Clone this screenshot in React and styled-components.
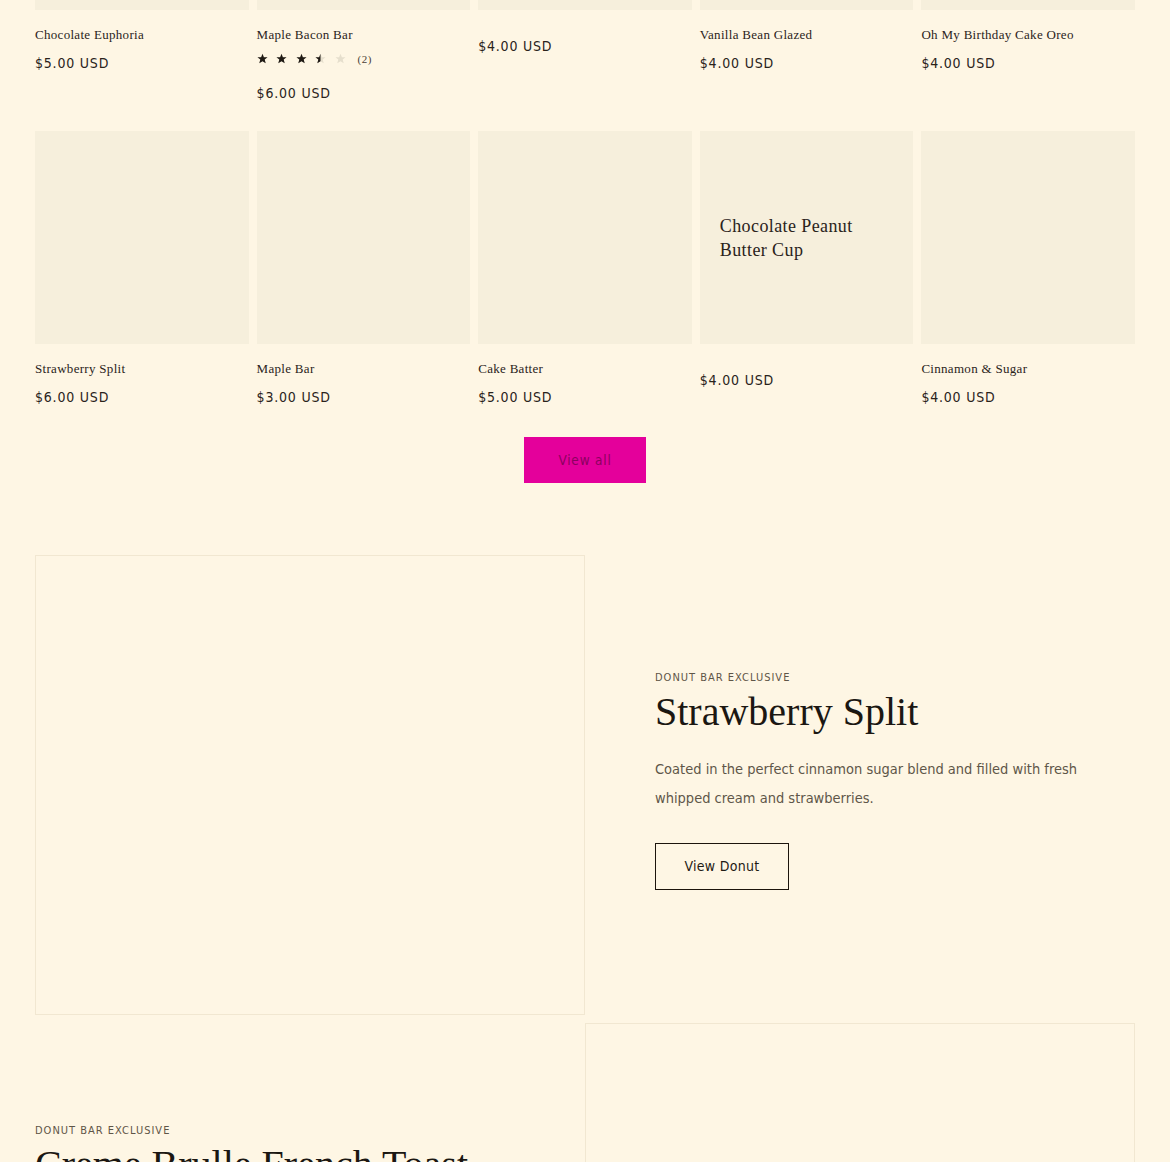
import React from "react"
import styled, { createGlobalStyle } from "styled-components"

const products = [
    { title: "Chocolate Euphoria", price: "$5.00 USD" },
    { title: "Maple Bacon Bar", price: "$6.00 USD", rating: 3.5, count: 2 },
    { title: "", price: "$4.00 USD" },
    { title: "Vanilla Bean Glazed", price: "$4.00 USD" },
    { title: "Oh My Birthday Cake Oreo", price: "$4.00 USD" },
    { title: "Strawberry Split", price: "$6.00 USD" },
    { title: "Maple Bar", price: "$3.00 USD" },
    { title: "Cake Batter", price: "$5.00 USD" },
    { title: "", fallback: "Chocolate Peanut Butter Cup", price: "$4.00 USD" },
    { title: "Cinnamon & Sugar", price: "$4.00 USD" },
]

const Star = ({ fill }) => (
    <svg width="11" height="11" viewBox="0 0 24 24">
        <defs>
            <clipPath id={`half-${fill}`}>
                <rect x="0" y="0" width={24 * fill} height="24" />
            </clipPath>
        </defs>
        <polygon points="12,1.5 15,9 23,9.3 16.8,14.3 19,22.3 12,17.8 5,22.3 7.2,14.3 1,9.3 9,9" fill="#e6dfcd" />
        <polygon points="12,1.5 15,9 23,9.3 16.8,14.3 19,22.3 12,17.8 5,22.3 7.2,14.3 1,9.3 9,9" fill="#1f1a14" clipPath={`url(#half-${fill})`} />
    </svg>
)

const Rating = ({ value, count }) => (
    <RatingRow>
        <Stars>
            {[0, 1, 2, 3, 4].map(i => (
                <Star key={i} fill={Math.max(0, Math.min(1, value - i))} />
            ))}
        </Stars>
        <RatingCount>({count})</RatingCount>
    </RatingRow>
)

const App = () => {
    return (
        <>
            <GlobalStyle />
            <Page>
                <Grid>
                    {products.map((p, i) => (
                        <Card key={i}>
                            <CardImage>
                                {p.fallback && <Fallback>{p.fallback}</Fallback>}
                            </CardImage>
                            <Info>
                                <CardTitle>{p.title}</CardTitle>
                                {p.rating && <Rating value={p.rating} count={p.count} />}
                                <Price tight={!!p.rating}>{p.price}</Price>
                            </Info>
                        </Card>
                    ))}
                </Grid>
                <ButtonRow>
                    <ViewAll>View all</ViewAll>
                </ButtonRow>

                <Feature>
                    <MediaBox />
                    <FeatureText side="right">
                        <Kicker>DONUT BAR EXCLUSIVE</Kicker>
                        <Heading>Strawberry Split</Heading>
                        <Body>Coated in the perfect cinnamon sugar blend and filled with fresh whipped cream and strawberries.</Body>
                        <OutlineButton>View Donut</OutlineButton>
                    </FeatureText>
                </Feature>

                <Feature reverse>
                    <MediaBox />
                    <FeatureText side="left">
                        <Kicker>DONUT BAR EXCLUSIVE</Kicker>
                        <Heading>Creme Brulle French Toast</Heading>
                        <Body>A brioche donut dipped in rich vanilla bean custard, dusted with cinnamon and finished with a crackly torched sugar top, just like the classic French dessert you know and love.</Body>
                        <OutlineButton>View Donut</OutlineButton>
                    </FeatureText>
                </Feature>
            </Page>
        </>
    )
}

// ///// Style //////
const GlobalStyle = createGlobalStyle`
    body {
        margin: 0;
        background: #fef6e4;
        color: #1f1a14;
        overflow: hidden;
    }
`
const Page = styled.div`
    margin-top: -204px;
    padding: 0 35px;
`

// Product grid
const Grid = styled.div`
    display: grid;
    grid-template-columns: repeat(5, 1fr);
    column-gap: 8px;
    row-gap: 28px;
`
const Card = styled.div`
    display: flex;
    flex-direction: column;
`
const CardImage = styled.div`
    box-sizing: border-box;
    aspect-ratio: 1 / 1;
    background: #f6efdc;
    display: flex;
    align-items: center;
    padding: 0 20px;
`
const Fallback = styled.div`
    font-family: "Liberation Serif", serif;
    font-size: 18px;
    line-height: 24px;
    letter-spacing: 0.4px;
    color: #2a231b;
    margin-top: 2px;
`
const Info = styled.div`
    padding-top: 16px;
    display: flex;
    flex-direction: column;
`
const CardTitle = styled.div`
    font-family: "Liberation Serif", serif;
    font-size: 13px;
    line-height: 17px;
    letter-spacing: 0.3px;
    color: #2a231b;
    &:empty { height: 0; }
`
const RatingRow = styled.div`
    display: flex;
    align-items: center;
    margin-top: 9px;
    height: 14px;
`
const Stars = styled.div`
    display: flex;
    gap: 8.5px;
    margin-right: 12px;
`
const RatingCount = styled.span`
    font-family: "Liberation Serif", serif;
    font-size: 11px;
    color: #4a4136;
    letter-spacing: 0.5px;
`
const Price = styled.div`
    font-family: "DejaVu Sans Condensed", sans-serif;
    font-size: 14px;
    line-height: 20px;
    letter-spacing: 0.8px;
    color: #2a231b;
    margin-top: ${props => props.tight ? "17px" : "10px"};
`
const ButtonRow = styled.div`
    display: flex;
    justify-content: center;
    margin-top: 30px;
`
const ViewAll = styled.button`
    width: 122px;
    height: 46px;
    border: none;
    background: #e4009b;
    color: #8c0060;
    font-family: "DejaVu Sans Condensed", sans-serif;
    font-size: 13.5px;
    letter-spacing: 0.8px;
    cursor: pointer;
`

// Feature blocks
const Feature = styled.div`
    display: flex;
    flex-direction: ${props => props.reverse ? "row-reverse" : "row"};
    margin-top: ${props => props.reverse ? "8px" : "72px"};
`
const MediaBox = styled.div`
    flex: 0 0 50%;
    height: 460px;
    box-sizing: border-box;
    border: 1px solid #f1e7d1;
`
const FeatureText = styled.div`
    flex: 1;
    display: flex;
    flex-direction: column;
    justify-content: center;
    align-items: flex-start;
    padding: ${props => props.side === "right" ? "0 45px 10px 70px" : "0 70px 10px 0"};
`
const Kicker = styled.div`
    font-family: "DejaVu Sans Condensed", sans-serif;
    font-size: 11px;
    letter-spacing: 1px;
    color: #5e5547;
    line-height: 14px;
`
const Heading = styled.h2`
    margin: 5px 0 0;
    font-family: "Liberation Serif", serif;
    font-weight: 400;
    font-size: 40px;
    line-height: 44px;
    color: #1b1712;
`
const Body = styled.p`
    margin: 21px 0 0;
    font-family: "DejaVu Sans Condensed", sans-serif;
    font-size: 14.5px;
    line-height: 29px;
    letter-spacing: 0;
    color: #5f5649;
`
const OutlineButton = styled.button`
    margin-top: 30px;
    width: 134px;
    height: 47px;
    background: transparent;
    border: 1px solid #1c140c;
    color: #1f1a14;
    font-family: "DejaVu Sans Condensed", sans-serif;
    font-size: 14px;
    letter-spacing: 0.3px;
    cursor: pointer;
`

export default App
